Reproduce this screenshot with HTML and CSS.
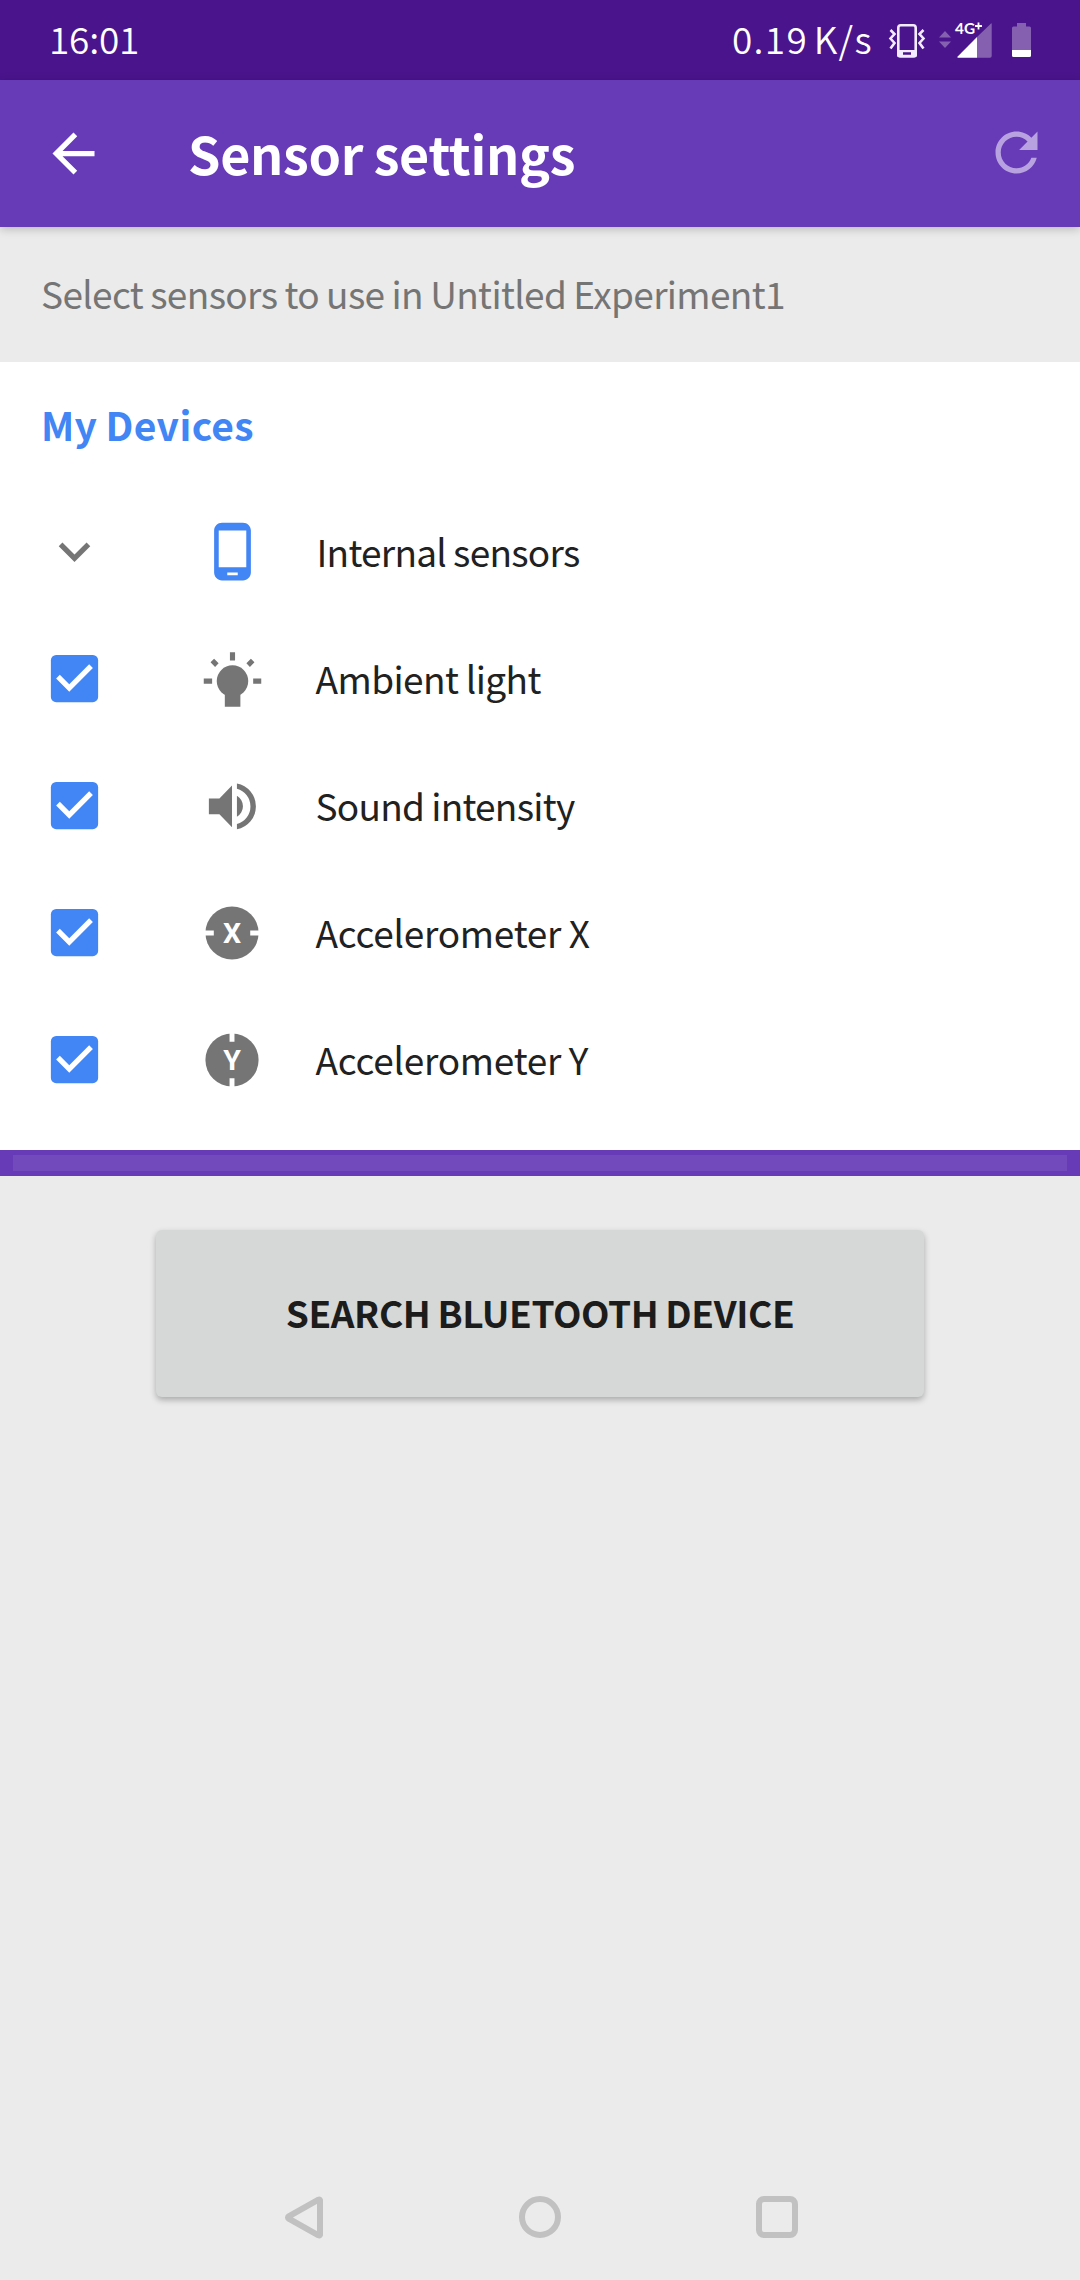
FILE: index.html
```html
<!DOCTYPE html>
<html lang="en">
<head>
<meta charset="utf-8">
<title>Sensor settings</title>
<link rel="stylesheet" href="styles.css">
</head>
<body>
<svg class="defs" aria-hidden="true">
  <symbol id="check" viewBox="0 0 24 24">
    <rect x="3" y="3" width="18" height="18" rx="2" fill="#4285f4"/>
    <path fill="#fff" d="M10 17l-5-5 1.41-1.41L10 14.17l7.59-7.59L19 8z"/>
  </symbol>
</svg>
<div class="screen">
  <header class="status">
    <span class="time">16:01</span>
    <span class="rate">0.19 K/s</span>
    <svg class="status-icons" viewBox="0 0 148 80">
      <g fill="none" stroke="#f3ebff" stroke-width="2.6">
        <path d="M5.5 29.500l4 4-4 4.500 4 4.500-4 5.500M38.500 29.500l-4 4 4 4.500-4 4.500 4 5.500" transform="translate(0 .5)"/>
        <rect x="13.300" y="25.300" width="17.400" height="31" rx="2.500"/>
      </g>
      <path fill="#f3ebff" fill-rule="evenodd" d="M12 50h20v5q0 2.500-2.500 2.500h-15Q12 57.500 12 55zM18 52.200v2.500h8v-2.500z"/>
      <path fill="#8560b0" d="M54 37.500l6-6.500 6 6.500zM54 41.500l6 6.500 6-6.500z"/>
      <path fill="#8560b0" d="M92 37l14-13.500q.7-.7.700.5V56q0 1.700-1.700 1.700H92z"/>
      <path fill="#fff" d="M92 37v20.700H73.300q-1.800 0-.6-1.300z"/>
      <text class="net" x="70" y="34" textLength="20" lengthAdjust="spacingAndGlyphs">4G</text>
      <path d="M93.500 22.500v7M90 26h7" stroke="#fff" stroke-width="1.800"/>
      <path fill="#8560b0" d="M132 23h9v3.500h3.500q1.500 0 1.500 1.500v22h-19V28q0-1.500 1.500-1.500h3.500z"/>
      <path fill="#fff" d="M127 50h19v5.500q0 1.500-1.500 1.500h-16q-1.500 0-1.500-1.500z"/>
    </svg>
  </header>

  <div class="appbar">
    <svg class="icon back" viewBox="0 0 24 24"><path fill="#fff" d="M20 11H7.830l5.590-5.590L12 4l-8 8 8 8 1.410-1.410L7.830 13H20z"/></svg>
    <h1>Sensor settings</h1>
    <svg class="icon refresh" viewBox="0 0 24 24"><path fill="#b8a2df" d="M17.650 6.350C16.200 4.900 14.210 4 12 4c-4.420 0-7.990 3.580-7.990 8s3.570 8 7.990 8c3.730 0 6.840-2.550 7.730-6h-2.080c-.82 2.330-3.040 4-5.650 4-3.310 0-6-2.690-6-6s2.690-6 6-6c1.660 0 3.140.69 4.220 1.780L13 11h7V4z"/></svg>
  </div>

  <p class="intro">Select sensors to use in Untitled Experiment1</p>

  <section class="devices">
    <h2>My Devices</h2>
    <ul>
      <li>
        <svg class="icon" viewBox="0 0 24 24"><path fill="#757575" d="M16.590 8.590L12 13.170 7.410 8.590 6 10l6 6 6-6z"/></svg>
        <svg class="icon" viewBox="0 0 24 24"><path fill="#4285f4" d="M16 1H8C6.340 1 5 2.340 5 4v16c0 1.660 1.340 3 3 3h8c1.660 0 3-1.340 3-3V4c0-1.660-1.340-3-3-3zm-2 20h-4v-1h4v1zm3.250-3H6.750V4h10.500v14z"/></svg>
        <span class="tight indent">Internal sensors</span>
      </li>
      <li>
        <svg class="icon"><use href="#check"/></svg>
        <svg class="icon" viewBox="0 0 64 64" fill="#757575"><circle cx="32" cy="34.600" r="16"/><path d="M24.200 44H40v16.700H24.200zM29.400 5.300h5.200v8.500h-5.200zM2.800 32h8.500v5.300H2.800zM53 32h8.200v5.300H53z"/><path d="M13.300 12l4.600 4.600-3.600 3.600-4.600-4.600zM50.700 12l-4.600 4.600 3.600 3.600 4.600-4.600z"/></svg>
        <span class="snug">Ambient light</span>
      </li>
      <li>
        <svg class="icon"><use href="#check"/></svg>
        <svg class="icon" viewBox="0 0 64 64" fill="#757575"><path d="M8 24.800h10.700L31.500 11.700v42.500L18.700 41H8zM36.500 22a12.500 12.500 0 0 1 0 21.500z"/><path d="M36.500 9.700a23.600 23.600 0 0 1 0 46.400v-5.400a18.400 18.400 0 0 0 0-35.600z"/></svg>
        <span class="tight">Sound intensity</span>
      </li>
      <li>
        <svg class="icon"><use href="#check"/></svg>
        <svg class="icon" viewBox="0 0 64 64"><circle cx="31.500" cy="32.500" r="27" fill="#757575"/><path fill="#fff" d="M4 30h9v5H4zM50 30h9v5h-9z"/><text class="axis" x="31.500" y="43">X</text></svg>
        <span>Accelerometer X</span>
      </li>
      <li>
        <svg class="icon"><use href="#check"/></svg>
        <svg class="icon" viewBox="0 0 64 64"><circle cx="31.500" cy="32.500" r="27" fill="#757575"/><path fill="#fff" d="M29 5h5v9h-5zM29 51h5v9h-5z"/><text class="axis" x="31.500" y="43">Y</text></svg>
        <span>Accelerometer Y</span>
      </li>
    </ul>
  </section>

  <div class="band"><div class="band-fill"></div></div>

  <main>
    <button type="button">SEARCH BLUETOOTH DEVICE</button>
  </main>

  <nav>
    <svg viewBox="0 0 44 44"><path d="M39 5.200v34.600q-.3 1.200-1.600.6L7.800 23.700q-1.700-1.200 0-2.400L37.400 4.600q1.300-.6 1.600.6z"/></svg>
    <svg viewBox="0 0 44 44"><circle cx="22" cy="22" r="18"/></svg>
    <svg viewBox="0 0 44 44"><rect x="4" y="4" width="36" height="36" rx="5"/></svg>
  </nav>
</div>
</body>
</html>
```
FILE: styles.css
```css
* { box-sizing: border-box; margin: 0; padding: 0; }

body {
  background: #ebebeb;
  font-family: "Noto Sans CJK SC", "Noto Sans", sans-serif;
  font-size: 37px;
  color: #212121;
}

.defs { display: none; }

.screen {
  width: 1080px;
  height: 2280px;
  display: flex;
  flex-direction: column;
}

.status {
  height: 80px;
  background: #4a148c;
  color: #fff;
  display: flex;
  align-items: center;
  padding-left: 49px;
  font-weight: 350;
}
.time, .rate { line-height: 76px; height: 80px; white-space: nowrap; }
.time { flex: 1; letter-spacing: -0.2px; }
.rate { width: 155px; letter-spacing: 1.3px; word-spacing: -4px; }
.status-icons { width: 148px; height: 80px; margin-right: 47px; margin-left: -2px; }
.net { font: 700 15px Lato, sans-serif; fill: #fff; }

.appbar {
  height: 147px;
  background: #673ab7;
  display: flex;
  align-items: center;
  padding: 0 32px 0 42px;
  z-index: 1;
  box-shadow: 0 2px 9px rgba(0, 0, 0, .22);
}
.appbar h1 {
  flex: 1;
  margin-left: 83px;
  font-size: 52px;
  font-weight: 700;
  line-height: 76px;
  padding-bottom: 2px;
  color: #fff;
  letter-spacing: -0.3px;
  word-spacing: -1px;
}

.icon { width: 63px; height: 63px; flex: none; }
.refresh { margin-bottom: 3px; }

.intro {
  height: 135px;
  padding: 0 41px;
  line-height: 133px;
  color: #757575;
  white-space: nowrap;
  letter-spacing: -0.65px;
  word-spacing: -0.5px;
}

.devices { height: 788px; background: #fff; }
.devices h2 {
  height: 126px;
  line-height: 124px;
  padding-left: 41px;
  font-size: 39px;
  font-weight: 700;
  color: #4285f4;
  letter-spacing: 0.35px;
  word-spacing: -1px;
}
.devices ul { list-style: none; }
.devices li {
  height: 127px;
  display: flex;
  align-items: center;
  padding-left: 43px;
}
.devices li .icon { margin-bottom: 1px; }
.devices li .icon + .icon { margin-left: 94.5px; }
.devices li span { margin-left: 52px; padding-bottom: 2px; letter-spacing: -0.25px; word-spacing: -0.5px; }
.devices li .tight { letter-spacing: -0.75px; }
.devices li .snug { letter-spacing: -0.55px; }
.devices li .indent { margin-left: 53px; }
.devices li .axis { font: 700 29px Roboto, sans-serif; fill: #fff; text-anchor: middle; }

.band { height: 26px; background: #673ab7; padding: 5px 13px; }
.band-fill { height: 16px; background: #724abc; }

main {
  flex: 1;
  display: flex;
  justify-content: center;
  align-items: flex-start;
  padding-top: 54px;
}
button {
  width: 768px;
  height: 167px;
  border: 0;
  border-radius: 6px;
  background: #d6d8d7;
  box-shadow: 0 3px 6px rgba(0, 0, 0, .28);
  font: inherit;
  font-weight: 700;
  color: #1c1c1c;
  letter-spacing: -0.4px;
  word-spacing: -1px;
  padding-bottom: 3px;
}

nav {
  height: 126px;
  display: flex;
  justify-content: center;
  align-items: center;
  gap: 193px;
}
nav svg { width: 44px; height: 44px; fill: none; stroke: #c1c1c1; stroke-width: 6; }
```
